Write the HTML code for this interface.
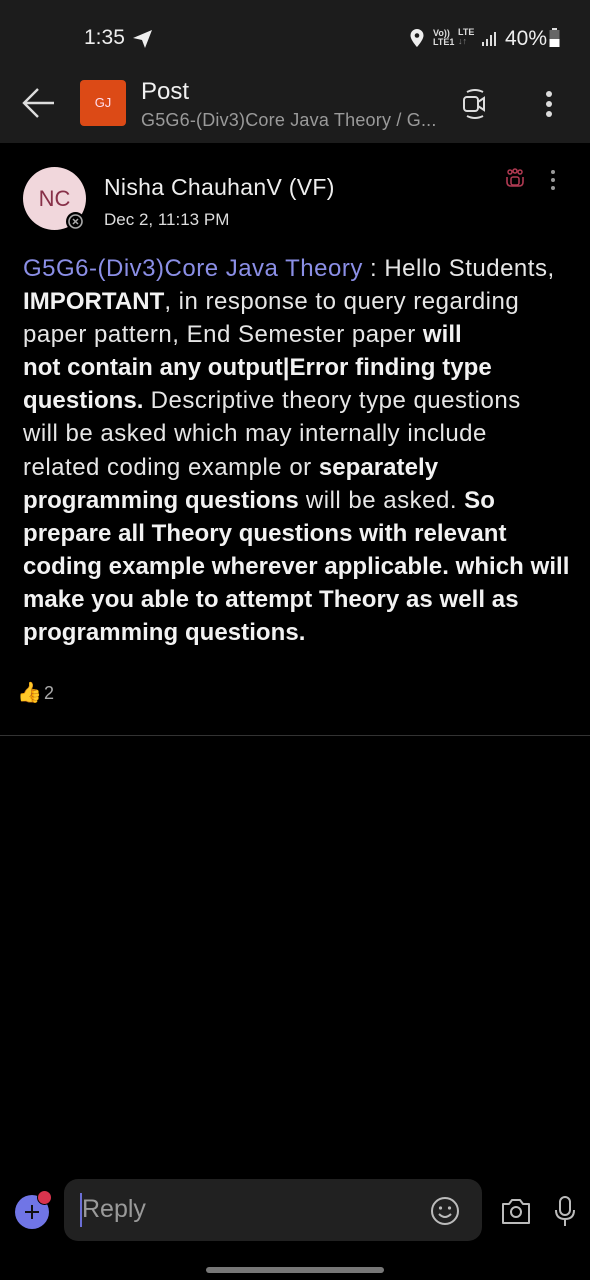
<!DOCTYPE html>
<html><head><meta charset="utf-8"><style>
*{margin:0;padding:0;box-sizing:border-box}
body{width:590px;height:1280px;background:#000;font-family:"Liberation Sans",sans-serif;color:#fff;position:relative;overflow:hidden}
.abs{position:absolute}
.hdr{left:0;top:0;width:590px;height:143px;background:#1c1c1c}
.msg{left:23px;top:252px;font-size:24px;line-height:33.1px;color:#e6e6e6;white-space:nowrap;letter-spacing:0.5px}
.msg b{color:#f2f2f2;letter-spacing:0.05px}
.lnk{color:#8b8fe6}
</style></head><body>
<div class="abs hdr"></div>
<div class="abs" style="left:84px;top:26px;font-size:21px;color:#eee">1:35</div>
<svg class="abs" style="left:132px;top:29px" width="22" height="20" viewBox="0 0 22 20"><path d="M1 9 L20 1 L13 19 L10 11 Z" fill="#eee"/></svg>
<svg class="abs" style="left:409px;top:28px" width="16" height="20" viewBox="0 0 16 20"><path d="M8 1a6.5 6.5 0 0 0-6.5 6.5C1.5 12 8 19 8 19s6.5-7 6.5-11.5A6.5 6.5 0 0 0 8 1z" fill="#eee"/><circle cx="8" cy="7.5" r="2.3" fill="#1c1c1c"/></svg>
<div class="abs" style="left:433px;top:29px;font-size:9px;line-height:9px;color:#ddd;font-weight:bold">Vo))<br>LTE1</div>
<div class="abs" style="left:458px;top:28px;font-size:9px;line-height:9px;color:#ddd;font-weight:bold">LTE<br><span style="color:#888">↓↑</span></div>
<svg class="abs" style="left:481px;top:31px" width="18" height="16"><rect x="1" y="11" width="2" height="4" fill="#ddd"/><rect x="5" y="8" width="2" height="7" fill="#ddd"/><rect x="9" y="4" width="2" height="11" fill="#ddd"/><rect x="13" y="1" width="2" height="14" fill="#ddd"/></svg>
<div class="abs" style="left:505px;top:27px;font-size:21px;color:#eee">40%</div>
<svg class="abs" style="left:549px;top:28px" width="12" height="20"><rect x="3" y="0" width="5" height="2" fill="#ddd"/><rect x="0.5" y="2" width="10" height="17" fill="#666"/><rect x="0.5" y="11" width="10" height="8" fill="#fff"/></svg>
<svg class="abs" style="left:22px;top:86px" width="34" height="34" viewBox="0 0 34 34"><path d="M32 17H3M16 3L2 17l14 14" stroke="#ddd" stroke-width="2.4" fill="none"/></svg>
<div class="abs" style="left:80px;top:80px;width:46px;height:46px;background:#dc4a16;border-radius:4px;color:#fde;font-size:13px;text-align:center;line-height:46px">GJ</div>
<div class="abs" style="left:141px;top:78px;font-size:24px;color:#f0f0f0">Post</div>
<div class="abs" style="left:141px;top:110px;font-size:18px;color:#9a9a9a;white-space:nowrap;letter-spacing:0.2px">G5G6-(Div3)Core Java Theory / G...</div>
<svg class="abs" style="left:460px;top:88px" width="30" height="32" viewBox="0 0 30 32"><path d="M7 4q8-4 16 0M7 28q8 4 16 0" stroke="#ddd" stroke-width="2" fill="none"/><rect x="4" y="9" width="14" height="14" rx="3" stroke="#ddd" stroke-width="2" fill="none"/><path d="M18 14l6-4v12l-6-4" stroke="#ddd" stroke-width="2" fill="none"/></svg>
<svg class="abs" style="left:543px;top:90px" width="12" height="28"><circle cx="6" cy="4" r="3" fill="#ddd"/><circle cx="6" cy="14" r="3" fill="#ddd"/><circle cx="6" cy="24" r="3" fill="#ddd"/></svg>
<div class="abs" style="left:23px;top:167px;width:63px;height:63px;border-radius:50%;background:#f1d7dc;color:#873048;font-size:22px;text-align:center;line-height:63px">NC</div>
<div class="abs" style="left:66px;top:212px;width:19px;height:19px;border-radius:50%;background:#000;"></div>
<svg class="abs" style="left:67px;top:213px" width="17" height="17" viewBox="0 0 17 17"><circle cx="8.5" cy="8.5" r="6.5" stroke="#aaa" stroke-width="1.6" fill="none"/><path d="M6 6l5 5M11 6l-5 5" stroke="#aaa" stroke-width="1.5"/></svg>
<div class="abs" style="left:104px;top:174px;font-size:23px;color:#eee;letter-spacing:0.3px">Nisha ChauhanV (VF)</div>
<div class="abs" style="left:104px;top:210px;font-size:17px;color:#ddd">Dec 2, 11:13 PM</div>
<svg class="abs" style="left:504px;top:168px" width="22" height="20" viewBox="0 0 22 20"><circle cx="6" cy="4" r="2" stroke="#b03a52" stroke-width="1.5" fill="none"/><circle cx="11" cy="3" r="2" stroke="#b03a52" stroke-width="1.5" fill="none"/><circle cx="16" cy="4" r="2" stroke="#b03a52" stroke-width="1.5" fill="none"/><path d="M3 9v5q0 4 4 4h8q4 0 4-4V9" stroke="#b03a52" stroke-width="1.6" fill="none"/><rect x="7" y="9" width="8" height="8" rx="2" stroke="#b03a52" stroke-width="1.5" fill="none"/></svg>
<svg class="abs" style="left:549px;top:169px" width="8" height="22"><circle cx="4" cy="3" r="2" fill="#999"/><circle cx="4" cy="11" r="2" fill="#999"/><circle cx="4" cy="19" r="2" fill="#999"/></svg>
<div class="abs msg">
<span class="lnk">G5G6-(Div3)Core Java Theory</span> : Hello Students,<br>
<b>IMPORTANT</b>, in response to query regarding<br>
paper pattern, End Semester paper <b>will</b><br>
<b>not contain any output|Error finding type</b><br>
<b>questions.</b> Descriptive theory type questions<br>
will be asked which may internally include<br>
related coding example or <b>separately</b><br>
<b>programming questions</b> will be asked. <b>So</b><br>
<b>prepare all Theory questions with relevant</b><br>
<b>coding example wherever applicable. which will</b><br>
<b>make you able to attempt Theory as well as</b><br>
<b>programming questions.</b>
</div>
<div class="abs" style="left:17px;top:680px;font-size:20px">👍</div>
<div class="abs" style="left:44px;top:683px;font-size:18px;color:#aaa">2</div>
<div class="abs" style="left:0;top:735px;width:590px;height:1px;background:#333"></div>
<div class="abs" style="left:64px;top:1179px;width:418px;height:62px;border-radius:14px;background:#212121"></div>
<div class="abs" style="left:80px;top:1193px;width:2px;height:34px;background:#6b6fd6"></div>
<div class="abs" style="left:82px;top:1195px;font-size:25px;color:#9a9a9a">Reply</div>
<svg class="abs" style="left:429px;top:1195px" width="32" height="32" viewBox="0 0 32 32"><circle cx="16" cy="16" r="13" stroke="#bbb" stroke-width="2" fill="none"/><circle cx="11.5" cy="13" r="1.6" fill="#bbb"/><circle cx="20.5" cy="13" r="1.6" fill="#bbb"/><path d="M10 19q6 6 12 0" stroke="#bbb" stroke-width="2" fill="none"/></svg>
<div class="abs" style="left:15px;top:1195px;width:34px;height:34px;border-radius:50%;background:#7075e6"></div>
<svg class="abs" style="left:22px;top:1202px" width="20" height="20"><path d="M10 3v14M3 10h14" stroke="#111" stroke-width="2"/></svg>
<div class="abs" style="left:37px;top:1190px;width:15px;height:15px;border-radius:50%;background:#d9344e;border:1px solid #000"></div>
<svg class="abs" style="left:500px;top:1196px" width="32" height="30" viewBox="0 0 32 30"><path d="M3 8h6l3-4h8l3 4h6v19H3z" stroke="#bbb" stroke-width="2" fill="none" stroke-linejoin="round"/><circle cx="16" cy="16" r="5" stroke="#bbb" stroke-width="2" fill="none"/></svg>
<svg class="abs" style="left:553px;top:1196px" width="24" height="32" viewBox="0 0 24 32"><rect x="7" y="1" width="10" height="18" rx="5" stroke="#bbb" stroke-width="2" fill="none"/><path d="M3 14q0 9 9 9t9-9M12 23v7" stroke="#bbb" stroke-width="2" fill="none"/></svg>
<div class="abs" style="left:206px;top:1267px;width:178px;height:6px;border-radius:3px;background:#777"></div>
</body></html>
